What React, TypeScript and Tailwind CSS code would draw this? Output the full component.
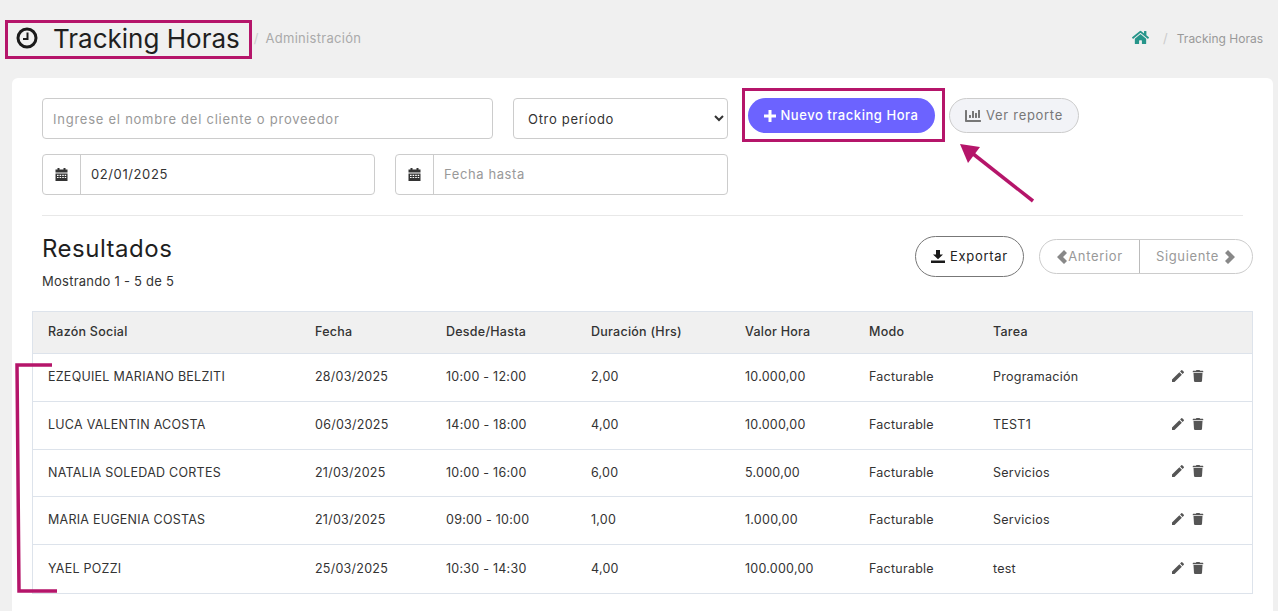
import { FaHome, FaChartBar, FaTrash } from "react-icons/fa";
import { MdEdit } from "react-icons/md";

const rows = [
  { name: "EZEQUIEL MARIANO BELZITI", date: "28/03/2025", range: "10:00 - 12:00", hours: "2,00", rate: "10.000,00", task: "Programación" },
  { name: "LUCA VALENTIN ACOSTA", date: "06/03/2025", range: "14:00 - 18:00", hours: "4,00", rate: "10.000,00", task: "TEST1" },
  { name: "NATALIA SOLEDAD CORTES", date: "21/03/2025", range: "10:00 - 16:00", hours: "6,00", rate: "5.000,00", task: "Servicios" },
  { name: "MARIA EUGENIA COSTAS", date: "21/03/2025", range: "09:00 - 10:00", hours: "1,00", rate: "1.000,00", task: "Servicios" },
  { name: "YAEL POZZI", date: "25/03/2025", range: "10:30 - 14:30", hours: "4,00", rate: "100.000,00", task: "test" },
];

const gridCols = "grid grid-cols-[267px_131px_145px_154px_124px_124px_179px_1fr] items-center";

function CalendarIcon() {
  return (
    <svg width="13" height="13" viewBox="0 0 13 13" fill="#333">
      <rect x="2.5" y="0" width="2" height="2.5" />
      <rect x="8.5" y="0" width="2" height="2.5" />
      <rect x="0.5" y="1.5" width="12" height="3" />
      <path d="M.5 5.5h12V13H.5zM2 6.7v1.2h1.6V6.7zm2.6 0v1.2h1.6V6.7zm2.6 0v1.2h1.6V6.7zm2.5 0v1.2h1.5V6.7zM2 8.9v1.2h1.6V8.9zm2.6 0v1.2h1.6V8.9zm2.6 0v1.2h1.6V8.9zm2.5 0v1.2h1.5V8.9z" fillRule="evenodd" />
    </svg>
  );
}

function Chevron({ right }: { right?: boolean }) {
  return (
    <svg width="12" height="14" viewBox="0 0 12 14" fill="#888">
      <path d={right ? "M4 0l7 7-7 7-3-3 4-4-4-4z" : "M8 0L1 7l7 7 3-3-4-4 4-4z"} />
    </svg>
  );
}

function DateField({ value, placeholder }: { value?: string; placeholder?: string }) {
  return (
    <div className="flex h-[41px] w-[333px] rounded border border-[#ccc] bg-white">
      <div className="flex w-[38px] items-center justify-center border-r border-[#ccc]">
        <CalendarIcon />
      </div>
      <input
        readOnly
        value={value ?? ""}
        placeholder={placeholder}
        className="min-w-0 flex-1 px-[10px] pt-[1px] text-[13px] tracking-[0.6px] text-[#333] outline-none placeholder:text-[#999]"
      />
    </div>
  );
}

export default function App() {
  return (
    <div className="relative h-[611px] overflow-hidden bg-[#f0f0f0] font-['Inter',sans-serif]">
      {/* Header */}
      <div className="flex h-[78px] items-center pl-[16px] pr-[15px]">
        <svg className="mb-[2px]" width="22" height="22" viewBox="0 0 22 22" fill="none" stroke="#1a1a1a" strokeWidth="3">
          <circle cx="11" cy="11" r="9" />
          <path d="M11.5 5.5v6.5H7" strokeWidth="2" />
        </svg>
        <h1 className="ml-[15px] text-[26px] leading-none text-[#1f1f1f]">Tracking Horas</h1>
        <span className="ml-[14px] text-[13px] text-[#ccc]">/</span>
        <span className="ml-[7px] text-[13px] tracking-[0.3px] text-[#aaa]">Administración</span>
        <div className="ml-auto flex items-center">
          <FaHome className="mb-[4px] text-[17px] text-[#26958a]" />
          <span className="ml-[14px] text-[13px] text-[#ccc]">/</span>
          <span className="ml-[9px] text-[12px] text-[#999]">Tracking Horas</span>
        </div>
      </div>

      {/* Card */}
      <div className="ml-[12px] h-[533px] w-[1261px] rounded-t-md bg-white pt-[20px]">
        <div className="flex pl-[30px]">
          <div className="w-[686px]">
            <div className="flex gap-[20px]">
              <input
                readOnly
                placeholder="Ingrese el nombre del cliente o proveedor"
                className="h-[41px] w-[451px] rounded border border-[#ccc] px-[10px] text-[13px] tracking-[0.75px] outline-none placeholder:text-[#999]"
              />
              <select
                defaultValue="otro"
                className="h-[41px] w-[215px] rounded border border-[#ccc] bg-white pl-[10px] text-[13px] tracking-[0.7px] text-[#333]"
              >
                <option value="otro">Otro período</option>
              </select>
            </div>
            <div className="mt-[15px] flex gap-[20px]">
              <DateField value="02/01/2025" />
              <DateField placeholder="Fecha hasta" />
            </div>
          </div>
          <div className="ml-[20px] flex h-[35px] items-center">
            <button className="flex h-[35px] w-[187px] items-center justify-center gap-[4px] rounded-full bg-[#6c63ff] text-[13px] font-medium tracking-[0.55px] text-white">
              <svg width="12" height="12" viewBox="0 0 12 12" fill="white">
                <path d="M4.5 0h3v4.5H12v3H7.500V12h-3V7.500H0v-3h4.500z" />
              </svg>
              Nuevo tracking Hora
            </button>
            <button className="ml-[14px] flex h-[35px] w-[130px] items-center justify-center gap-[5px] rounded-full border border-[#ccc] bg-[#f2f3f7] text-[13px] tracking-[0.7px] text-[#777]">
              <FaChartBar className="text-[16px]" />
              Ver reporte
            </button>
          </div>
        </div>

        <div className="ml-[30px] mr-[30px] mt-[20px] border-t border-[#e8e8e8]" />

        <div className="ml-[30px] mr-[20px] mt-[20px] flex">
          <div>
            <h2 className="text-[24px] leading-[26px] tracking-[0.5px] text-[#1f1f1f]">Resultados</h2>
            <p className="mt-[9px] text-[13px] leading-[20px] tracking-[0.25px] text-[#333]">Mostrando 1 - 5 de 5</p>
          </div>
          <button className="ml-auto flex h-[41px] w-[109px] items-center justify-center gap-[5px] rounded-full border border-[#777] text-[13px] tracking-[0.7px] text-[#222]">
            <svg width="14" height="13" viewBox="0 0 14 13" fill="#1a1a1a">
              <path d="M5 0h4v4.500h3L7 9.200 2 4.500h3zM0 10.500h14V13H0z" />
            </svg>
            Exportar
          </button>
          <div className="ml-[15px] mt-[3px] flex h-[35px] w-[214px] rounded-full border border-[#ccc] text-[13px] tracking-[0.65px] text-[#999]">
            <div className="flex w-[100px] items-center justify-center border-r border-[#bbb]">
              <Chevron />
              Anterior
            </div>
            <div className="flex flex-1 items-center justify-center gap-[5px]">
              Siguiente
              <Chevron right />
            </div>
          </div>
        </div>

        {/* Table */}
        <div className="ml-[20px] mt-[20px] w-[1221px] border border-[#dde3eb] text-[12.5px] tracking-[0.25px] text-[#333]">
          <div className={`${gridCols} h-[42px] border-b border-[#dde3eb] bg-[#f0f0f0] pl-[15px] font-medium`}>
            <span>Razón Social</span>
            <span>Fecha</span>
            <span>Desde/Hasta</span>
            <span>Duración (Hrs)</span>
            <span>Valor Hora</span>
            <span>Modo</span>
            <span>Tarea</span>
            <span />
          </div>
          {rows.map((r, i) => (
            <div
              key={r.name}
              className={`${gridCols} h-[47.8px] pl-[15px] ${i < rows.length - 1 ? "border-b border-[#dde3eb]" : ""}`}
            >
              <span>{r.name}</span>
              <span>{r.date}</span>
              <span>{r.range}</span>
              <span>{r.hours}</span>
              <span>{r.rate}</span>
              <span>Facturable</span>
              <span>{r.task}</span>
              <span className="-ml-[2px] mb-[3px] flex items-center gap-[6px] text-[#555]">
                <MdEdit className="text-[16px]" />
                <FaTrash className="text-[12px]" />
              </span>
            </div>
          ))}
        </div>
      </div>

      {/* Annotations drawn over the screenshot */}
      <div className="absolute left-[5px] top-[20px] h-[39px] w-[247px] border-[3px] border-[#b5156a]" />
      <div className="absolute left-[742px] top-[88px] h-[54px] w-[203px] border-[3px] border-[#b5156a]" />
      <svg className="absolute left-0 top-0" width="1278" height="611" fill="none">
        <path d="M1033 201L972 153" stroke="#b5156a" strokeWidth="3.5" />
        <path d="M960 144L980 147L968 163Z" fill="#b5156a" />
        <path d="M52 365H17L19 591H57" stroke="#b5156a" strokeWidth="3.5" />
      </svg>
    </div>
  );
}
